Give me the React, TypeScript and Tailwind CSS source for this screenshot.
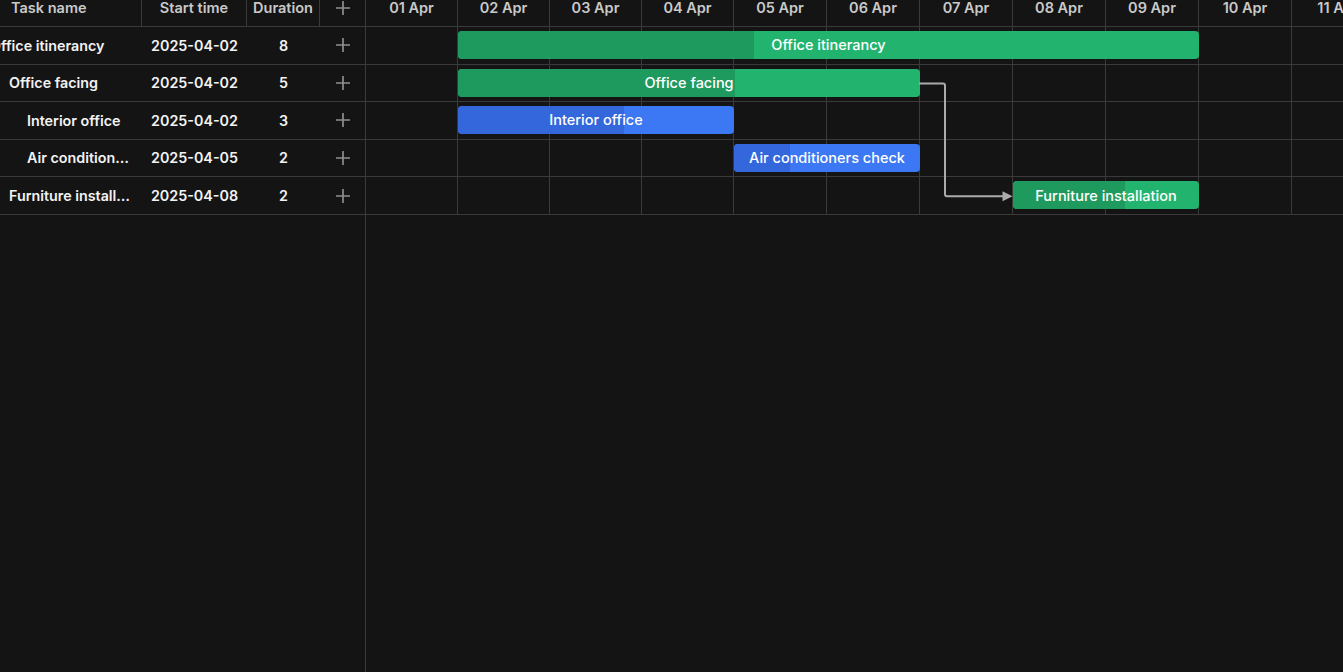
import { Fragment } from "react";

type Task = {
  name: string;
  start: string;
  duration: number;
  level: 0 | 1 | 2;
  offset: number;
  progress: number;
  color: "green" | "blue";
};

const ROW = 37.6;
const HEAD = 27;

const days = [
  { label: "01 Apr", w: 92 },
  { label: "02 Apr", w: 92 },
  { label: "03 Apr", w: 92 },
  { label: "04 Apr", w: 92 },
  { label: "05 Apr", w: 93 },
  { label: "06 Apr", w: 93 },
  { label: "07 Apr", w: 93 },
  { label: "08 Apr", w: 93 },
  { label: "09 Apr", w: 93 },
  { label: "10 Apr", w: 93 },
  { label: "11 Apr", w: 93 },
];

const colWidth = {
  92: "w-[92px]",
  93: "w-[93px]",
} as Record<number, string>;

// x where day i begins inside the timeline
const dayX = (i: number) => days.slice(0, i).reduce((s, d) => s + d.w, 0);

const tasks: Task[] = [
  { name: "Office itinerancy", start: "2025-04-02", duration: 8, level: 0, offset: 1, progress: 0.4, color: "green" },
  { name: "Office facing", start: "2025-04-02", duration: 5, level: 1, offset: 1, progress: 0.6, color: "green" },
  { name: "Interior office", start: "2025-04-02", duration: 3, level: 2, offset: 1, progress: 0.6, color: "blue" },
  { name: "Air conditioners check", start: "2025-04-05", duration: 2, level: 2, offset: 4, progress: 0.3, color: "blue" },
  { name: "Furniture installation", start: "2025-04-08", duration: 2, level: 1, offset: 7, progress: 0.6, color: "green" },
];

const indent = {
  0: "pl-0",
  1: "pl-[19px]",
  2: "pl-[37px]",
};

const barColors = {
  green: { bar: "bg-[#22b46f]", done: "bg-[#1f9a5f]" },
  blue: { bar: "bg-[#3c77f4]", done: "bg-[#3467dc]" },
};

const PlusIcon = ({ className = "" }: { className?: string }) => (
  <svg width="14" height="14" viewBox="0 0 14 14" className={className}>
    <path d="M7 0.5v13M0.5 7h13" stroke="currentColor" strokeWidth="1.7" strokeLinecap="round" fill="none" />
  </svg>
);

// dependency link: end of "Office facing" -> start of "Furniture installation"
const Link = () => {
  const x0 = dayX(6) - 1;
  const xTurn = dayX(6) + 25;
  const y0 = HEAD + ROW * 1.5;
  const y1 = HEAD + ROW * 4.5;
  const tip = dayX(7) - 0.5;
  return (
    <svg className="absolute left-0 top-0 pointer-events-none" width="977" height="220">
      <Fragment>
        <path
          d={`M ${x0} ${y0} H ${xTurn - 2} Q ${xTurn} ${y0} ${xTurn} ${y0 + 2} V ${y1 - 2} Q ${xTurn} ${y1} ${xTurn + 2} ${y1} H ${tip - 9}`}
          stroke="#ababab"
          strokeWidth="2"
          fill="none"
        />
        <path d={`M ${tip - 10} ${y1 - 5} L ${tip} ${y1} L ${tip - 10} ${y1 + 5} Z`} fill="#ababab" />
      </Fragment>
    </svg>
  );
};

const Grid = () => {
  return (
    <div className="flex h-full">
      {/* left task table */}
      <div className="w-[366px] shrink-0 border-r border-[#3a3a3a]">
        <div className="flex h-[27px] border-b border-[#3a3a3a] text-[14.5px] font-semibold text-[#c9c9c9] leading-[16px]">
          <div className="w-[142px] border-r border-[#3a3a3a] pl-[11px]">Task name</div>
          <div className="w-[105px] border-r border-[#3a3a3a] text-center">Start time</div>
          <div className="w-[73px] border-r border-[#3a3a3a] text-center">Duration</div>
          <div className="flex-1 flex justify-center pt-[1px]">
            <PlusIcon className="text-[#8e8e8e]" />
          </div>
        </div>
        {tasks.map((t) => (
          <div
            key={t.name}
            className="flex items-center h-[37.6px] border-b border-[#3a3a3a] text-[14.3px] font-semibold text-[#f2f2f2]"
          >
            <div className="w-[142px] overflow-hidden">
              <div className={`-ml-[10px] pr-[6px] truncate whitespace-nowrap ${indent[t.level]}`}>{t.name}</div>
            </div>
            <div className="w-[105px] text-center">{t.start}</div>
            <div className="w-[73px] text-center">{t.duration}</div>
            <div className="flex-1 flex justify-center">
              <PlusIcon className="text-[#8e8e8e]" />
            </div>
          </div>
        ))}
      </div>

      {/* timeline */}
      <div className="relative flex-1 overflow-hidden">
        <div className="flex h-[27px] border-b border-[#3a3a3a] w-max">
          {days.map((d) => (
            <div
              key={d.label}
              className={`${colWidth[d.w]} shrink-0 border-r border-[#3a3a3a] text-center text-[14.5px] font-semibold text-[#c9c9c9] leading-[16px]`}
            >
              {d.label}
            </div>
          ))}
        </div>
        {tasks.map((t) => {
          const c = barColors[t.color];
          const left = dayX(t.offset);
          const width = dayX(t.offset + t.duration) - left;
          return (
            <div key={t.name} className="relative flex h-[37.6px] border-b border-[#3a3a3a] w-max">
              {days.map((d) => (
                <div key={d.label} className={`${colWidth[d.w]} shrink-0 border-r border-[#3a3a3a]`} />
              ))}
              <div
                className={`absolute top-[4px] h-[28px] rounded-[4px] overflow-hidden ${c.bar}`}
                style={{ left, width }}
              >
                <div className={`h-full ${c.done}`} style={{ width: `${t.progress * 100}%` }} />
                <div className="absolute inset-0 flex items-center justify-center text-[14.5px] font-medium text-white whitespace-nowrap">
                  {t.name}
                </div>
              </div>
            </div>
          );
        })}
        <Link />
      </div>
    </div>
  );
};

export default function App() {
  return (
    <div className="h-[672px] w-full bg-[#141414] overflow-hidden font-['Inter',sans-serif]">
      <Grid />
    </div>
  );
}
